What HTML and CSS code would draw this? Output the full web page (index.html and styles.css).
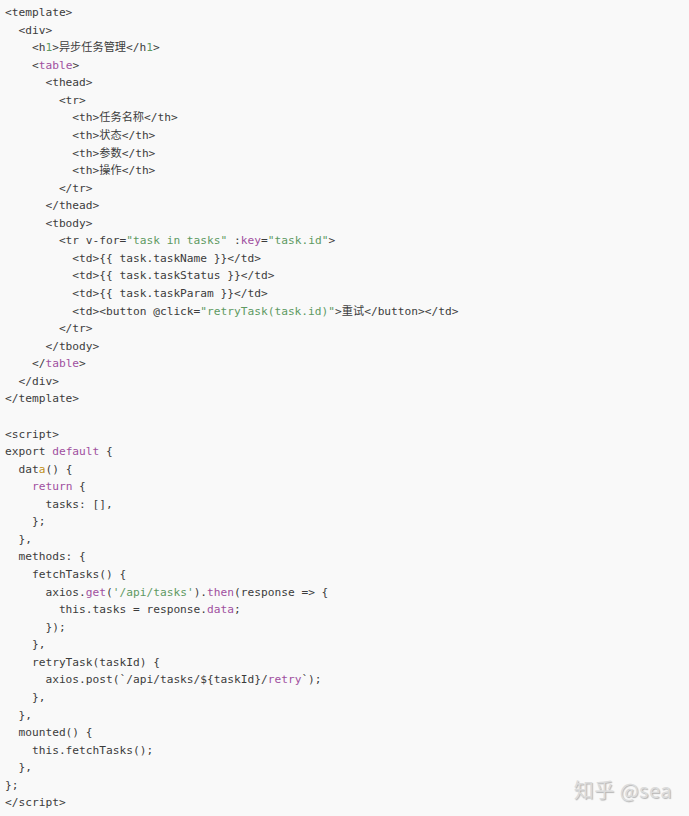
FILE: index.html
```html
<!DOCTYPE html>
<html lang="zh">
<head>
<meta charset="utf-8">
<link rel="stylesheet" href="styles.css">
</head>
<body>
<div class="page">
<pre class="code"><code>&lt;template&gt;
  &lt;div&gt;
    &lt;h<span class="n">1</span>&gt;异步任务管理&lt;/h<span class="n">1</span>&gt;
    &lt;<span class="k">table</span>&gt;
      &lt;thead&gt;
        &lt;tr&gt;
          &lt;th&gt;任务名称&lt;/th&gt;
          &lt;th&gt;状态&lt;/th&gt;
          &lt;th&gt;参数&lt;/th&gt;
          &lt;th&gt;操作&lt;/th&gt;
        &lt;/tr&gt;
      &lt;/thead&gt;
      &lt;tbody&gt;
        &lt;tr v-for=<span class="s">"task in tasks"</span> :<span class="k">key</span>=<span class="s">"task.id"</span>&gt;
          &lt;td&gt;{{ task.taskName }}&lt;/td&gt;
          &lt;td&gt;{{ task.taskStatus }}&lt;/td&gt;
          &lt;td&gt;{{ task.taskParam }}&lt;/td&gt;
          &lt;td&gt;&lt;button @click=<span class="s">"retryTask(task.id)"</span>&gt;重试&lt;/button&gt;&lt;/td&gt;
        &lt;/tr&gt;
      &lt;/tbody&gt;
    &lt;/<span class="k">table</span>&gt;
  &lt;/div&gt;
&lt;/template&gt;

&lt;script&gt;
export <span class="k">default</span> {
  dat<span class="o">a</span>() {
    <span class="k">return</span> {
      tasks: [],
    };
  },
  methods: {
    fetchTasks() {
      axios.<span class="k">get</span>(<span class="s">'/api/tasks'</span>).<span class="k">then</span>(response =&gt; {
        this.tasks = response.<span class="k">data</span>;
      });
    },
    retryTask(taskId) {
      axios.post(`/api/tasks/${taskId}/<span class="k">retry</span>`);
    },
  },
  mounted() {
    this.fetchTasks();
  },
};
&lt;/script&gt;</code></pre>
<div class="watermark">知乎 @sea</div>
</div>
</body>
</html>
```
FILE: styles.css
```css
html, body {
  margin: 0;
  padding: 0;
  background: #f9f9f9;
}
.page {
  position: relative;
  width: 689px;
  height: 816px;
  overflow: hidden;
}
.code {
  margin: 0;
  padding: 4px 0 0 5px;
  font-family: "DejaVu Sans Mono", "Noto Sans CJK SC", monospace;
  font-size: 11.2px;
  line-height: 17.56px;
  color: #3c3c3c;
  white-space: pre;
}
.code code {
  font-family: inherit;
}
.k { color: #a0509f; }
.s { color: #5e9a62; }
.n { color: #5e9a62; }
.o { color: #c0901a; }
.watermark {
  position: absolute;
  right: 17px;
  bottom: 14px;
  font-family: "Noto Sans CJK SC", "Noto Sans", sans-serif;
  font-size: 20px;
  line-height: 24px;
  color: #dcdcdc;
  text-shadow: 1px 1px 1px #b4b4b4;
  letter-spacing: 0.5px;
}
```
